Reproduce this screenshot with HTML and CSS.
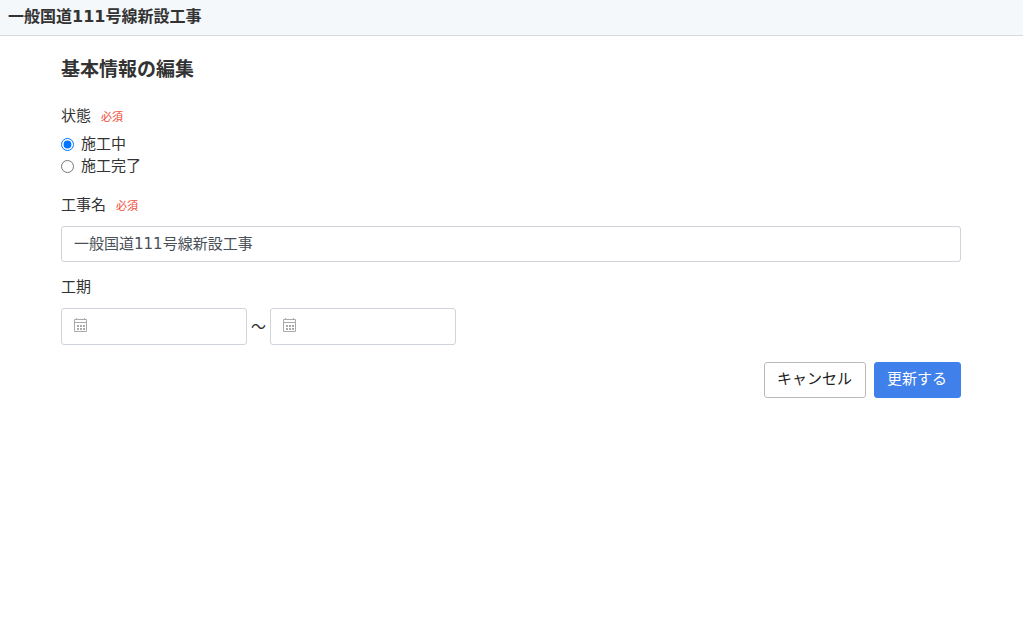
FILE: index.html
```html
<!DOCTYPE html>
<html lang="ja">
<head>
<meta charset="utf-8">
<title>基本情報の編集</title>
<link rel="stylesheet" href="styles.css">
</head>
<body>
<header class="topbar">一般国道111号線新設工事</header>
<main class="page">
  <h1 class="title">基本情報の編集</h1>
  <form class="form">
    <fieldset class="field status">
      <legend class="label">状態<span class="required">必須</span></legend>
      <label class="option"><input class="radio" type="radio" name="status" checked>施工中</label>
      <label class="option"><input class="radio" type="radio" name="status">施工完了</label>
    </fieldset>
    <div class="field">
      <label class="label" for="name">工事名<span class="required">必須</span></label>
      <input class="input" id="name" type="text" value="一般国道111号線新設工事">
    </div>
    <div class="field period">
      <label class="label" for="start">工期</label>
      <div class="range">
        <div class="date">
          <svg class="calendar" viewBox="0 0 16 16" aria-hidden="true"><path d="M1.5 2.5h12v12h-12z" fill="none" stroke="#aaa"/><path d="M2 5h11v1H2zM3 1h1v2H3zM11 1h1v2h-1z" fill="#aaa"/><path d="M4 8h2v2H4zM7 8h2v2H7zM10 8h2v2h-2zM4 11h2v2H4zM7 11h2v2H7zM10 11h2v2h-2z" fill="#aaa"/></svg>
          <input class="date-input" id="start" type="text">
        </div>
        <span class="tilde">～</span>
        <div class="date">
          <svg class="calendar" viewBox="0 0 16 16" aria-hidden="true"><path d="M1.5 2.5h12v12h-12z" fill="none" stroke="#aaa"/><path d="M2 5h11v1H2zM3 1h1v2H3zM11 1h1v2h-1z" fill="#aaa"/><path d="M4 8h2v2H4zM7 8h2v2H7zM10 8h2v2h-2zM4 11h2v2H4zM7 11h2v2H7zM10 11h2v2h-2z" fill="#aaa"/></svg>
          <input class="date-input" type="text" aria-label="工期の終了日">
        </div>
      </div>
    </div>
    <div class="actions">
      <button class="button" type="button">キャンセル</button>
      <button class="button primary" type="submit">更新する</button>
    </div>
  </form>
</main>
</body>
</html>
```
FILE: styles.css
```css
* { box-sizing: border-box; }
body { margin: 0; background: #fff; color: #333; font: 15px/22px "DejaVu Sans", "Noto Sans CJK JP", sans-serif; }
.topbar { height: 36px; padding: 0 8px; border-bottom: 1px solid #d8dbde; background: #f4f8fb; font-size: 16px; line-height: 34px; font-weight: 700; }
.page { max-width: 901px; margin: 0 auto; padding: 20px 1px 0 0; }
.title { margin: 0 0 23px; font-size: 19px; line-height: 26px; font-weight: 700; }
.field { margin: 0 0 14px; padding: 0; border: 0; }
.label { display: block; margin: 0 0 8px; padding: 0; line-height: 22px; }
.status { margin-bottom: 17px; }
.status .label { margin-bottom: 4px; }
.period .label { margin-bottom: 10px; }
.required { margin-left: 10px; color: #f04a36; font-size: 11px; }
.option { display: flex; align-items: center; height: 22px; }
.radio { width: 13px; height: 13px; margin: 0 7px 0 0; }
.input, .date { width: 100%; height: 36px; border: 1px solid #ced4da; border-radius: 3px; background: #fff; }
.input { display: block; padding: 0 12px 4px; color: #495057; font: inherit; }
.range { display: flex; align-items: center; }
.date { display: flex; align-items: center; width: 186px; height: 37px; padding: 0 11px 3px; }
.date-input { flex: 1; min-width: 0; padding: 0 8px; border: 0; outline: 0; font: inherit; }
.calendar { flex: none; width: 16px; height: 16px; }
.tilde { width: 23px; text-align: center; }
.actions { display: flex; justify-content: flex-end; gap: 8px; padding-top: 3px; }
.button { height: 36px; padding: 0 13px 3px 12px; border: 1px solid #bbb; border-radius: 3px; background: #fff; color: #222; font: inherit; }
.primary { border-color: #3f80ea; background: #3f80ea; color: #fff; }
```
